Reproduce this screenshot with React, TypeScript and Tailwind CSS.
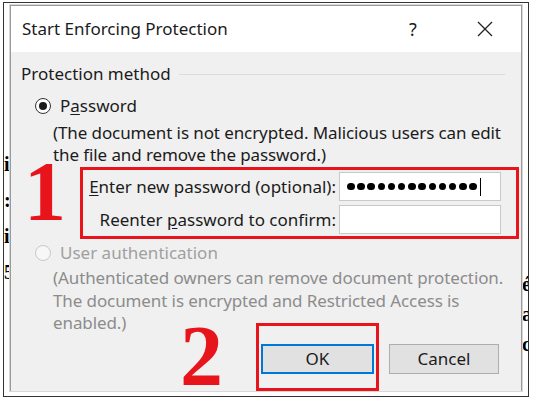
import React from 'react';

// Annotated "Start Enforcing Protection" dialog (Word)
function Radio({ checked, disabled }: { checked?: boolean; disabled?: boolean }) {
  return (
    <span
      className={`flex items-center justify-center w-[16px] h-[16px] rounded-full border ${
        disabled ? 'border-[#c8c8c8] bg-[#f7f7f7]' : 'border-[#333] bg-white'
      }`}
    >
      {checked && <span className="block w-[8px] h-[8px] rounded-full bg-[#1a1a1a]" />}
    </span>
  );
}

export default function App() {
  return (
    <div className="w-[534px] h-[400px] bg-white overflow-hidden pt-[2px] pl-[3px] pr-[5px] pb-[3px] font-['Noto_Sans',sans-serif] text-[#1b1b1b]">
      <div className="relative h-full border border-[#333] pt-[2px] pl-[6px] pr-[6px] pb-[5px]">
        {/* bits of the document behind the dialog */}
        <div className="absolute left-0 top-[150px] w-[6px] flex flex-col gap-[14px] overflow-hidden font-['Liberation_Serif',serif] font-bold text-[20px] leading-[22px] text-black">
          <span>i</span>
          <span>:</span>
          <span>i</span>
          <span>5</span>
        </div>
        <div className="absolute right-0 top-[270px] w-[6px] flex flex-col gap-[8px] overflow-hidden font-['Liberation_Serif',serif] font-bold text-[20px] leading-[22px] text-black">
          <span>é</span>
          <span>a</span>
          <span>c</span>
        </div>

        <div className="relative h-full flex flex-col border border-[#9a9a9a] outline outline-1 outline-[#d8d8d8]">
          {/* title bar */}
          <div className="h-[46px] shrink-0 bg-white flex items-center pl-[11px] pr-[28px] text-[17px]">
            <span className="flex-1">Start Enforcing Protection</span>
            <span className="w-[20px] text-center mr-[54px] text-[18px]">?</span>
            <svg width="16" height="16" viewBox="0 0 16 16" className="text-[#222]">
              <path d="M1 1 L15 15 M15 1 L1 15" stroke="currentColor" strokeWidth="1.3" />
            </svg>
          </div>

          {/* body */}
          <div className="flex-1 bg-[#f0f0f0] pl-[10px] pr-[2px] pt-[11px] text-[17px] leading-[22px]">
            <div className="flex items-center pr-[14px]">
              <span>Protection method</span>
              <span className="flex-1 h-px bg-[#dcdcdc] ml-[8px]" />
            </div>

            <div className="flex items-center gap-[9px] mt-[10px] pl-[14px]">
              <Radio checked />
              <span>
                P<span className="underline underline-offset-2">a</span>ssword
              </span>
            </div>

            <div className="pl-[32px] mt-[5px] leading-[22px] tracking-[-0.1px]">
              <div>(The document is not encrypted. Malicious users can edit</div>
              <div>the file and remove the password.)</div>
            </div>

            <div className="ml-[59px] mt-[1px] border-[3px] border-[#e8141c] pt-[2px] pb-[2px] pl-[4px] pr-[15px] flex flex-col gap-[4px] whitespace-nowrap">
              <div className="flex items-center">
                <span className="flex-1 text-right pr-[3px]">
                  <span className="underline underline-offset-2">E</span>nter new password (optional):
                </span>
                <span className="w-[162px] h-[29px] shrink-0 bg-white border border-[#c9c9c9] flex items-center gap-[2.7px] pl-[7px]">
                  {Array.from({ length: 13 }).map((_, i) => (
                    <span key={i} className="block w-[7.5px] h-[7.5px] rounded-full bg-black" />
                  ))}
                  <span className="block w-px h-[18px] bg-black ml-[1px]" />
                </span>
              </div>
              <div className="flex items-center">
                <span className="flex-1 text-right pr-[3px]">
                  Reenter <span className="underline underline-offset-2">p</span>assword to confirm:
                </span>
                <span className="w-[162px] h-[29px] shrink-0 bg-white border border-[#c9c9c9]" />
              </div>
            </div>

            <div className="flex items-center gap-[9px] mt-[3px] pl-[14px] text-[#a0a0a0]">
              <Radio disabled />
              <span>User authentication</span>
            </div>

            <div className="pl-[32px] mt-[3px] text-[#8c8c8c] leading-[22.5px] tracking-[-0.1px]">
              <div>(Authenticated owners can remove document protection.</div>
              <div>The document is encrypted and Restricted Access is</div>
              <div>enabled.)</div>
            </div>

            <div className="flex items-end justify-end gap-[10px] -mt-[12px] pr-[20px]">
              <div className="border-[3px] border-[#e8141c] pt-[18px] pb-[14px] px-[2px]">
                <button className="w-[113px] h-[30px] bg-[#e1e1e1] border-2 border-[#0078d7] text-[17px]">OK</button>
              </div>
              <button className="w-[110px] h-[30px] mb-[17px] bg-[#e1e1e1] border border-[#adadad] text-[17px]">Cancel</button>
            </div>
          </div>

          {/* annotation numbers */}
          <span className="absolute left-[13px] top-[158px] font-['Liberation_Serif',serif] font-bold text-[84px] leading-[56px] text-[#e8141c]">1</span>
          <span className="absolute left-[169px] top-[321px] font-['Liberation_Serif',serif] font-bold text-[86px] leading-[58px] text-[#e8141c]">2</span>
        </div>
      </div>
    </div>
  );
}
